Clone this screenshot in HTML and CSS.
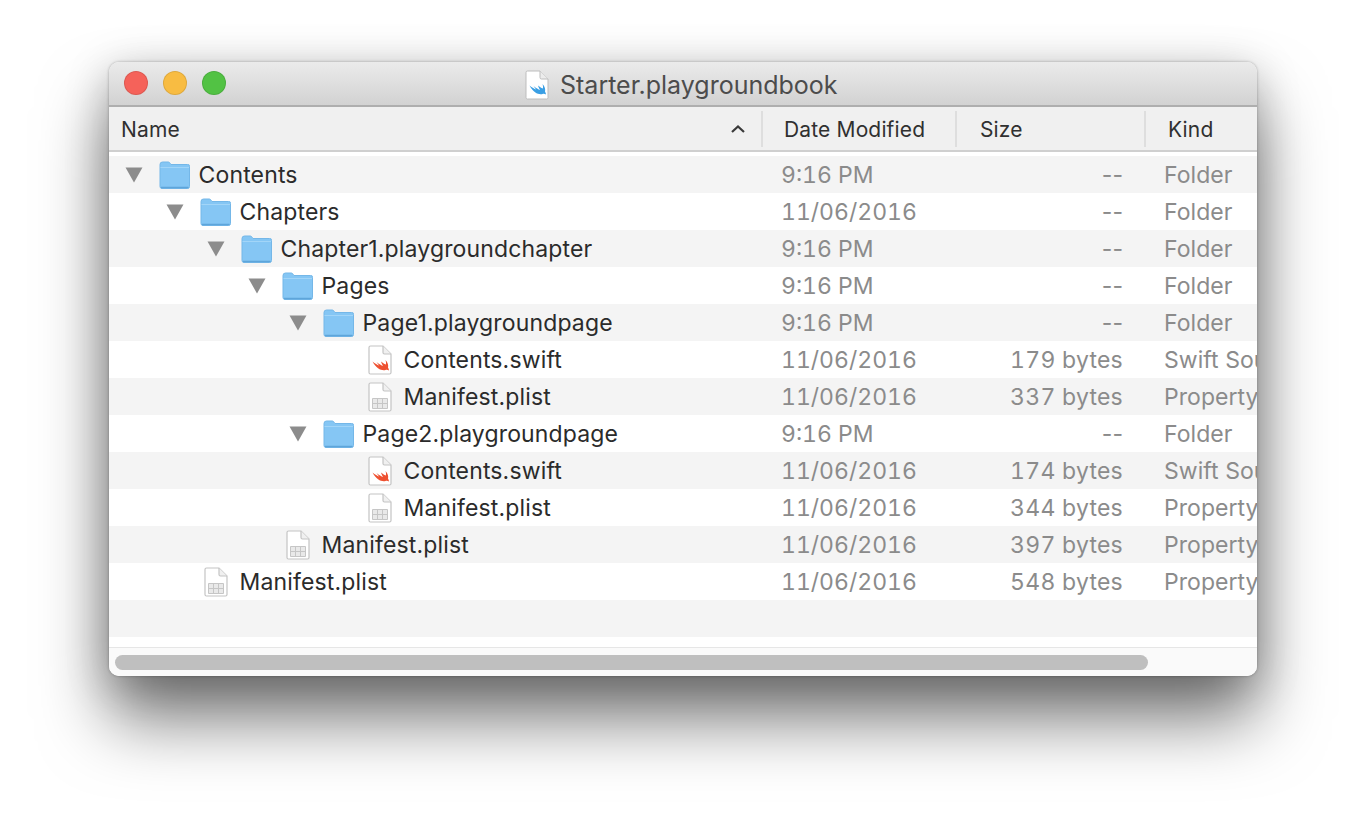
FILE: index.html
```html
<!DOCTYPE html>
<html lang="en">
<head>
<meta charset="utf-8">
<title>Starter.playgroundbook</title>
<link rel="stylesheet" href="styles.css">
</head>
<body>
<svg class="defs" width="0" height="0" aria-hidden="true">
  <symbol id="folder" viewBox="0 0 31 28">
    <path d="M1 6V3.500A2.500 2.500 0 0 1 3.500 1H9C10.500 1 11 2 12 3.500H28.500A1.800 1.800 0 0 1 30.500 5.500V25.500A2 2 0 0 1 28.500 27.500H3A2 2 0 0 1 1 25.500Z" fill="#85c6f4" stroke="#74b7e8" stroke-width="1"/>
    <path d="M1.500 6.500H30" stroke="#a2d5f8" stroke-width="1"/>
    <path d="M2 26.500H29.500" stroke="#5ea5da" stroke-width="1.500"/>
  </symbol>
  <symbol id="tri" viewBox="0 0 20 16">
    <path d="M1.500 0.500H18.500L10 15.500Z" fill="#8c8c8c"/>
  </symbol>
  <symbol id="page" viewBox="0 0 24 30">
    <path d="M1 2.500A1.500 1.500 0 0 1 2.500 1H15L23 9V27.500A1.500 1.500 0 0 1 21.500 29H2.500A1.500 1.500 0 0 1 1 27.500Z" fill="#fff" stroke="#c4c4c4" stroke-width="1.200"/>
    <path d="M15 1V7.500A1.500 1.500 0 0 0 16.500 9H23" fill="#f0f0f0" stroke="#c4c4c4" stroke-width="1.200"/>
  </symbol>
  <symbol id="swift" viewBox="0 0 24 30">
    <use href="#page"/>
    <path d="M4.500 16.500C7 18.500 9.500 20 11 20.500L8.500 17C11 19 13.500 20.500 15 21C14 19.500 13.500 18 13 16.500C15.500 18.500 17 19.500 17.800 19.500C18.300 18 18 16.500 17.500 15C20 17.500 20.500 20.500 20 22.500C20.500 23.500 21 24.500 21 25.500C20 24.800 18.500 24.500 17.500 25C14 26 8.500 24 4.500 16.500Z" fill="#ee5030"/>
  </symbol>
  <symbol id="bookdoc" viewBox="0 0 24 30">
    <path d="M1 2.500A1.500 1.500 0 0 1 2.500 1H15L23 9V27.500A1.500 1.500 0 0 1 21.500 29H2.500A1.500 1.500 0 0 1 1 27.500Z" fill="#fff" stroke="#bdbdbd" stroke-width="1"/>
    <path d="M15 1V7.500A1.500 1.500 0 0 0 16.500 9H23" fill="#ececec" stroke="#bdbdbd" stroke-width="1"/>
    <path d="M4.500 15.500C7 17.500 9.500 19 11 19.500L8.500 16C11 18 13.500 19.500 15 20C14 18.500 13.500 17 13 15.500C15.500 17.500 17 18.500 17.800 18.500C18.300 17 18 15.500 17.500 14C20 16.500 20.500 19.500 20 21.500C20.500 22.500 21 23.500 21 24.500C20 23.800 18.500 23.500 17.500 24C14 25 8.500 23 4.500 15.500Z" fill="#3a9fe4"/>
  </symbol>
  <symbol id="plist" viewBox="0 0 24 30">
    <use href="#page"/>
    <path d="M4.500 16.500H19.500V26.500H4.500ZM4.500 21.500H19.500M9.500 16.500V26.500M14.500 16.500V26.500" fill="#e9e9e9" stroke="#c6c6c6" stroke-width="1"/>
  </symbol>
</svg>

<main class="window">
  <header class="titlebar">
    <div class="lights">
      <span class="light light-red"></span>
      <span class="light light-yellow"></span>
      <span class="light light-green"></span>
    </div>
    <div class="title">
      <svg class="title-icon"><use href="#bookdoc"/></svg>
      <span>Starter.playgroundbook</span>
    </div>
  </header>

  <div class="columns">
    <div class="col col-name">
      <span>Name</span>
      <svg class="chevron" viewBox="0 0 16 10"><path d="M2 8L8 2.500L14 8" fill="none" stroke="#3a3a3a" stroke-width="2.200"/></svg>
    </div>
    <div class="col col-date">Date Modified</div>
    <div class="col col-size">Size</div>
    <div class="col col-kind">Kind</div>
  </div>

  <div class="list">
    <div class="row">
      <div class="name lvl0"><svg class="twisty"><use href="#tri"/></svg><svg class="folder"><use href="#folder"/></svg><span>Contents</span></div>
      <div class="date">9:16 PM</div><div class="size dash">--</div><div class="kind">Folder</div>
    </div>
    <div class="row">
      <div class="name lvl1"><svg class="twisty"><use href="#tri"/></svg><svg class="folder"><use href="#folder"/></svg><span>Chapters</span></div>
      <div class="date">11/06/2016</div><div class="size dash">--</div><div class="kind">Folder</div>
    </div>
    <div class="row">
      <div class="name lvl2"><svg class="twisty"><use href="#tri"/></svg><svg class="folder"><use href="#folder"/></svg><span>Chapter1.playgroundchapter</span></div>
      <div class="date">9:16 PM</div><div class="size dash">--</div><div class="kind">Folder</div>
    </div>
    <div class="row">
      <div class="name lvl3"><svg class="twisty"><use href="#tri"/></svg><svg class="folder"><use href="#folder"/></svg><span>Pages</span></div>
      <div class="date">9:16 PM</div><div class="size dash">--</div><div class="kind">Folder</div>
    </div>
    <div class="row">
      <div class="name lvl4"><svg class="twisty"><use href="#tri"/></svg><svg class="folder"><use href="#folder"/></svg><span>Page1.playgroundpage</span></div>
      <div class="date">9:16 PM</div><div class="size dash">--</div><div class="kind">Folder</div>
    </div>
    <div class="row">
      <div class="name lvl5 leaf"><svg class="file"><use href="#swift"/></svg><span>Contents.swift</span></div>
      <div class="date">11/06/2016</div><div class="size">179 bytes</div><div class="kind">Swift Source</div>
    </div>
    <div class="row">
      <div class="name lvl5 leaf"><svg class="file"><use href="#plist"/></svg><span>Manifest.plist</span></div>
      <div class="date">11/06/2016</div><div class="size">337 bytes</div><div class="kind">Property List</div>
    </div>
    <div class="row">
      <div class="name lvl4"><svg class="twisty"><use href="#tri"/></svg><svg class="folder"><use href="#folder"/></svg><span>Page2.playgroundpage</span></div>
      <div class="date">9:16 PM</div><div class="size dash">--</div><div class="kind">Folder</div>
    </div>
    <div class="row">
      <div class="name lvl5 leaf"><svg class="file"><use href="#swift"/></svg><span>Contents.swift</span></div>
      <div class="date">11/06/2016</div><div class="size">174 bytes</div><div class="kind">Swift Source</div>
    </div>
    <div class="row">
      <div class="name lvl5 leaf"><svg class="file"><use href="#plist"/></svg><span>Manifest.plist</span></div>
      <div class="date">11/06/2016</div><div class="size">344 bytes</div><div class="kind">Property List</div>
    </div>
    <div class="row">
      <div class="name lvl3 leaf"><svg class="file"><use href="#plist"/></svg><span>Manifest.plist</span></div>
      <div class="date">11/06/2016</div><div class="size">397 bytes</div><div class="kind">Property List</div>
    </div>
    <div class="row">
      <div class="name lvl1 leaf"><svg class="file"><use href="#plist"/></svg><span>Manifest.plist</span></div>
      <div class="date">11/06/2016</div><div class="size">548 bytes</div><div class="kind">Property List</div>
    </div>
    <div class="row"></div>
    <div class="row-end"></div>
  </div>

  <div class="scrollbar"><div class="thumb"></div></div>
</main>
</body>
</html>
```

FILE: styles.css
```css
* { box-sizing: border-box; }

html, body { height: 100%; }

body {
  margin: 0;
  padding: 62px 109px 0;
  background: #fff;
  overflow: hidden;
  font-family: Inter, "Liberation Sans", sans-serif;
}

.defs { position: absolute; }

.window {
  width: 1148px;
  height: 614px;
  display: flex;
  flex-direction: column;
  background: #fff;
  border-radius: 10px;
  overflow: hidden;
  box-shadow: 0 0 3px rgba(0, 0, 0, 0.3), 0 44px 68px rgba(0, 0, 0, 0.52), 0 8px 44px rgba(0, 0, 0, 0.22);
}

.titlebar {
  flex: none;
  height: 45px;
  display: flex;
  align-items: center;
  position: relative;
  padding-left: 15px;
  background: linear-gradient(#ebebeb, #d2d2d2);
  border-bottom: 2px solid #aeaeae;
}

.lights { display: flex; gap: 15px; margin-top: -2px; }

.light {
  width: 24px;
  height: 24px;
  border-radius: 50%;
  border: 1px solid rgba(0, 0, 0, 0.1);
}
.light-red { background: #f5625a; }
.light-yellow { background: #f8bc42; }
.light-green { background: #52c244; }

.title {
  position: absolute;
  left: 416px;
  top: 6px;
  display: flex;
  align-items: center;
  gap: 11px;
  font-size: 25px;
  color: #4c4c4c;
  line-height: 34px;
}

.title-icon { width: 24px; height: 30px; }

.columns {
  flex: none;
  height: 45px;
  display: flex;
  align-items: center;
  background: #f0f0f0;
  border-bottom: 2px solid #cfcfcf;
  font-size: 21px;
  letter-spacing: 0.15px;
  color: #303030;
}

.col {
  height: 36px;
  padding-top: 1px;
  display: flex;
  align-items: center;
  border-right: 2px solid #dedede;
}

.col-name {
  width: 654px;
  padding-left: 12px;
  padding-right: 15px;
  justify-content: space-between;
}
.col-date { width: 194px; padding-left: 21px; }
.col-size { width: 189px; padding-left: 23px; }
.col-kind { flex: 1; padding-left: 22px; border-right: 0; }

.chevron { width: 16px; height: 10px; }

.list {
  flex: none;
  height: 496px;
  padding-top: 4px;
  border-bottom: 1px solid #e6e6e6;
  background: #fff;
}

.row {
  height: 37px;
  display: flex;
  align-items: center;
  font-size: 23px;
  white-space: nowrap;
  overflow: hidden;
}

.row:nth-child(odd) { background: #f4f4f4; }

.row-end { height: 10px; }

.name {
  width: 653px;
  flex: none;
  display: flex;
  align-items: center;
  color: #2b2b2b;
  letter-spacing: 0.15px;
}

.lvl0 { padding-left: 15px; }
.lvl1 { padding-left: 56px; }
.lvl2 { padding-left: 97px; }
.lvl3 { padding-left: 138px; }
.lvl4 { padding-left: 179px; }
.lvl5 { padding-left: 220px; }

.twisty { width: 20px; height: 16px; margin-right: 15px; flex: none; }
.folder { width: 31px; height: 28px; margin-right: 8.5px; flex: none; }
.file { width: 24px; height: 30px; margin-left: 39px; margin-right: 11.5px; flex: none; }

.date {
  width: 226px;
  flex: none;
  padding-left: 19px;
  color: #8b8b8b;
  font-variant-numeric: tabular-nums;
}
.size {
  width: 135px;
  flex: none;
  text-align: right;
  color: #8b8b8b;
  font-variant-numeric: tabular-nums;
  letter-spacing: 0.25px;
}
.dash { font-variant-numeric: normal; letter-spacing: 0; }
.kind { flex: 1; padding-left: 41px; color: #8b8b8b; overflow: hidden; letter-spacing: 0.05px; }

.scrollbar {
  flex: 1;
  padding: 7px 109px 0 6px;
  background: #fafafa;
}

.thumb {
  height: 15px;
  border-radius: 8px;
  background: #bfbfbf;
}
```
